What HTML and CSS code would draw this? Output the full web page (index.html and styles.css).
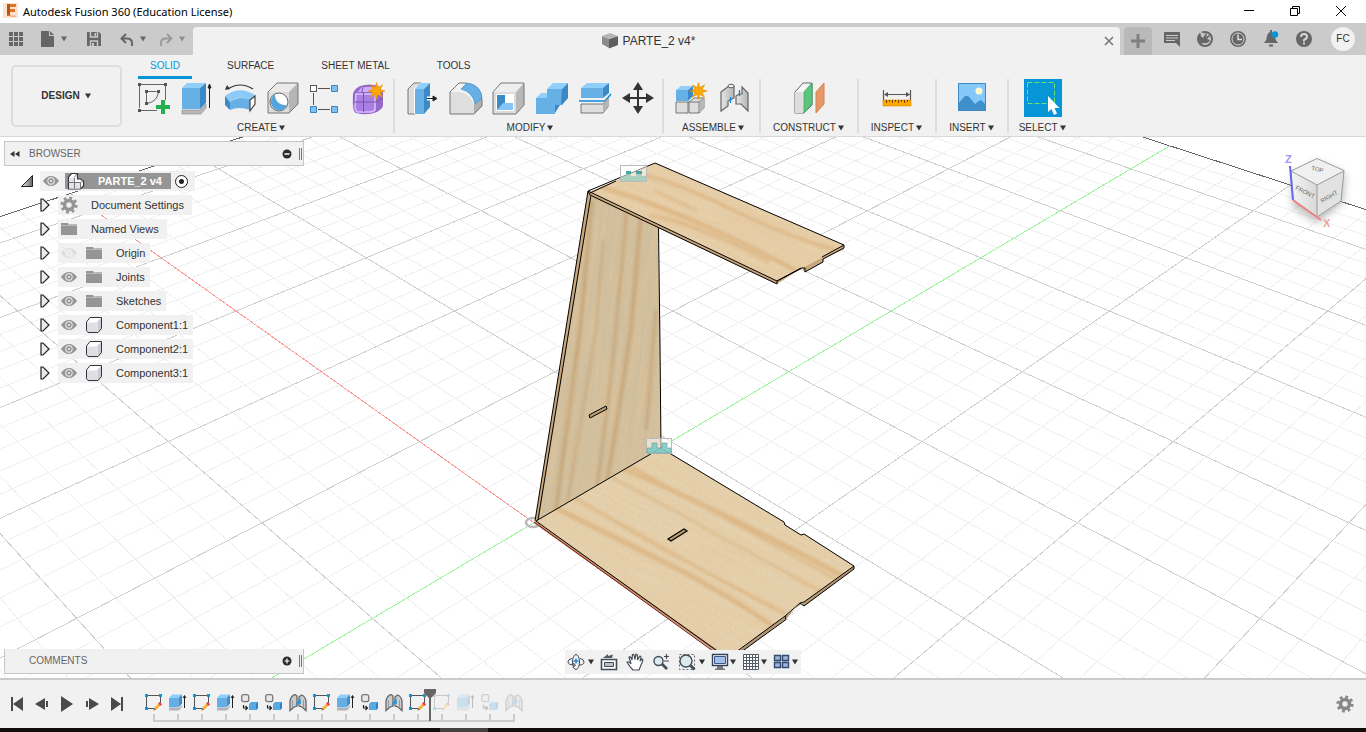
FILE: index.html
```html
<!DOCTYPE html>
<html lang="en">
<head>
<meta charset="utf-8">
<title>Autodesk Fusion 360 (Education License)</title>
<link rel="stylesheet" href="styles.css">
</head>
<body>
<svg class="sprite" aria-hidden="true">
  <defs>
    <linearGradient id="steel" x1="0" x2="1"><stop offset="0" stop-color="#e6e6e6"/><stop offset="1" stop-color="#b5b5b5"/></linearGradient>
    <linearGradient id="tri" x1="0" x2="1"><stop offset="0" stop-color="#eee"/><stop offset="1" stop-color="#666"/></linearGradient>
    <symbol id="caret" viewBox="0 0 8 6"><path d="M1 0.5h6L4 5.5z" fill="currentColor"/></symbol>
    <symbol id="arrow" viewBox="0 0 10 14"><path d="M1 1h2l6 6-6 6H1z" fill="#ececec" stroke="#222" stroke-width="1.200"/></symbol>
    <symbol id="eye" viewBox="0 0 16 12"><path d="M0 6Q3.500 1 8 1T16 6Q12.500 11 8 11T0 6z" fill="#959595"/><circle cx="8" cy="6" r="3.700" fill="#f1f1f1"/><circle cx="8" cy="6" r="2.700" fill="#959595"/><circle cx="8" cy="6" r="1.100" fill="#f1f1f1"/></symbol>
    <symbol id="eye-off" viewBox="0 0 16 12"><path d="M0 6Q3.500 1 8 1T16 6Q12.500 11 8 11T0 6z" fill="#dcdcdc"/><circle cx="8" cy="6" r="3.700" fill="#f1f1f1"/><circle cx="8" cy="6" r="2.300" fill="#dcdcdc"/><path d="M1 0l14 12" stroke="#f1f1f1" stroke-width="3"/><path d="M2 0l13 12" stroke="#dcdcdc"/></symbol>
    <symbol id="folder" viewBox="0 0 16 14"><path d="M0 3.500V1h7l1.500 2.500z" fill="#959595"/><path d="M0 4h16v9H0z" fill="#959595"/><path d="M0 3h8l1-1h7v2H0z" fill="#b8b8b8"/></symbol>
    <symbol id="gear" viewBox="0 0 18 18"><circle cx="9" cy="9" r="4.500" fill="none" stroke="currentColor" stroke-width="3.600"/><circle cx="9" cy="9" r="7.200" fill="none" stroke="currentColor" stroke-width="2.800" stroke-dasharray="2.830 2.830"/></symbol>
    <symbol id="body" viewBox="0 0 18 18"><path d="M1.500 6L5 1.500h11.500v11L13 16.500H3l-1.500-2z" fill="#fff"/><path d="M2 6.500h10v9.500H3l-1-1.500z" fill="#dcdfe4"/><path d="M12.500 5.500l4-4v11l-4 4z" fill="#c9ccd4"/><path d="M1.500 6L5 1.500h11.500v11L13 16.500H3l-1.500-2z" fill="none" stroke="#33343c"/></symbol>
    <symbol id="sketch" viewBox="0 0 18 18"><path d="M3 1.500h12M1.500 3v10M15.500 3v6M3 14.500h6" stroke="#555" fill="none"/><path d="M0 0h3v3H0zM14 0h3v3h-3zM0 13h3v3H0z" fill="#0a96e6"/><path d="M8.500 16.500l1-3 4-4 2 2-4 4z" fill="#f9b233"/><path d="M13 9.500l1.500-1.500 2.500 2.200-1.500 1.700z" fill="#ee4050"/><path d="M8.500 16.500l.8-2.500 1.800 1.700z" fill="#777"/></symbol>
    <symbol id="extrude" viewBox="0 0 18 18"><path d="M0 14h10l3-3v2l-3 3.500H0z" fill="#b4b4b4"/><path d="M0 4h9.500v9.500H0z" fill="#62aee5"/><path d="M0 4l3-3.500h10L9.500 4z" fill="#8fcdf9"/><path d="M9.500 4L13 .5v9l-3.500 4z" fill="#3d8ecb"/><path d="M15.500 14V2M14 4l1.500-2.500L17 4" stroke="#222" fill="none"/></symbol>
    <symbol id="insertc" viewBox="0 0 18 18"><rect x=".7" y=".7" width="7" height="7" rx="2" fill="#e8e8e8" stroke="#777" stroke-width="1.300"/><path d="M8 10l2-2h7v6l-2 2H8z" fill="#58a8e2"/><path d="M15 10l2-2v6l-2 2z" fill="#2f80c0"/><path d="M2.500 11v3H6M4.500 12L6.500 14l-2 2" stroke="#222" stroke-width="1.200" fill="none"/></symbol>
    <symbol id="joint-s" viewBox="0 0 18 18"><path d="M1 7q1-5 5-6.500l2 1.500v10l-3 1-4 3.500zM17 7q-1-5-4.500-6L10 3v9l3 1 4 3.500z" fill="#cdcdcd" stroke="#666" stroke-width="1.300"/><path d="M3.500 6v7M14.500 6v7" stroke="#999"/><path d="M7 11l4-5v4" stroke="#0a96e6" stroke-width="1.300" fill="none"/></symbol>
    <symbol id="spark" viewBox="0 0 18 18"><path d="M9 0l1.500 5.200L15.400 2.600 12.800 7.500 18 9l-5.200 1.500 2.600 4.900-4.900-2.600L9 18l-1.500-5.200-4.900 2.600 2.600-4.900L0 9l5.200-1.500-2.600-4.900 4.900 2.600z" fill="#ffa800" stroke="#e08a00" stroke-width=".6"/></symbol>
    <symbol id="assy" viewBox="0 0 18 18"><path d="M1.500 5l3-3.500h6V7h3l3 2v5l-3 3h-12z" fill="#fff" stroke="#33343c" stroke-width="1.200"/><path d="M2 5.500h5v5H2zM2 11h5v5.500H2zM8 11h5v5.500H8z" fill="#e2e4e8"/><path d="M7.500 5.500V16M1.500 10.500h12M7.500 5L10 2M13.500 10.500l2.500-2M13.500 10.500V17" stroke="#777" fill="none"/></symbol>
  </defs>
</svg>

<div class="app">
  <header class="titlebar">
    <svg class="logo" width="15" height="15" viewBox="0 0 15 15"><rect width="15" height="15" fill="#fbe3cf"/><path d="M4 1h9v3H7v2h5v3H7v4H4z" fill="#d9762b"/><path d="M4 1h3v10l-3 1z" fill="#b7541b"/><path d="M7 11h6v3H7z" fill="#f3b588"/><path d="M8 9.500h5v3H8z" fill="#fbe3cf"/></svg>
    <span class="app-name">Autodesk Fusion 360 (Education License)</span>
    <div class="win-buttons">
      <button aria-label="Minimize"><svg width="12" height="12"><path d="M1 4.500h10" stroke="#000"/></svg></button>
      <button aria-label="Restore"><svg width="12" height="12"><path d="M1.500 2.500h7v7h-7zM3.500 2V.500h7v7H9" fill="none" stroke="#000"/></svg></button>
      <button aria-label="Close"><svg width="12" height="12"><path d="M1 0l10 10M11 0L1 10" stroke="#000"/></svg></button>
    </div>
  </header>

  <div class="appbar">
    <div class="quick">
      <button aria-label="Data panel"><svg width="14" height="14" fill="#666"><path d="M0 0h4v4H0zM5 0h4v4H5zM10 0h4v4h-4zM0 5h4v4H0zM5 5h4v4H5zM10 5h4v4h-4zM0 10h4v4H0zM5 10h4v4H5zM10 10h4v4h-4z"/></svg></button>
      <button class="file" aria-label="File"><svg width="14" height="16"><path d="M0 0h8v5h5v11H0z" fill="#666"/><path d="M9 0l4 4H9z" fill="#666"/></svg><svg class="car" width="8" height="6"><use href="#caret"/></svg></button>
      <button class="save" aria-label="Save"><svg width="14" height="14"><path d="M0 0h12l2 2v12H0z" fill="#666"/><path d="M3.500 0v5h7V0M3.500 14V9h7v5" fill="none" stroke="#cbcbcb" stroke-width="1.400"/><path d="M5 11h2v3H5zM7.500 1h1.500v3H7.500z" fill="#cbcbcb"/></svg></button>
      <button class="undo" aria-label="Undo"><svg width="14" height="13"><path d="M12 13V10q0-4.500-5-4.500H2M6 1L1.500 5.500 6 10" fill="none" stroke="#666" stroke-width="2"/></svg><svg class="car" width="8" height="6"><use href="#caret"/></svg></button>
      <button class="redo" aria-label="Redo"><svg width="14" height="13"><path d="M2 13V10q0-4.500 5-4.500h5M8 1l4.500 4.500L8 10" fill="none" stroke="#999" stroke-width="1.800"/></svg><svg class="car" width="8" height="6"><use href="#caret"/></svg></button>
    </div>
    <div class="doc-tab">
      <span class="doc-title"><svg width="16" height="16" viewBox="0 0 16 16"><path d="M0 3l7 3v9l-7-4z" fill="#8a8a8a"/><path d="M7 6l9-3v9l-9 3.500z" fill="#5f5f5f"/><path d="M0 3l8-3 8 3-9 3z" fill="#b5b5b5"/></svg>PARTE_2 v4*</span>
      <button class="tab-close" aria-label="Close tab"><svg width="10" height="10"><path d="M1 1l8 8M9 1L1 9" stroke="#777" stroke-width="1.600"/></svg></button>
    </div>
    <button class="new-tab" aria-label="New tab"><svg width="14" height="14"><path d="M7 0v14M0 7h14" stroke="#808080" stroke-width="3"/></svg></button>
    <div class="status">
      <button aria-label="Comments"><svg width="18" height="18"><path d="M1 2h16v15l-4-4H1z" fill="#666"/><path d="M3 5.500h12M3 8h12M3 10.500h9" stroke="#cbcbcb"/></svg></button>
      <button aria-label="Extensions"><svg width="18" height="18"><circle cx="9" cy="9" r="7" fill="none" stroke="#666" stroke-width="2"/><path d="M3 4l4 4 1-2 2-3 1 1-1 3 3-2 1 1-3 3 3 1q-2 4-6 3l-4 1-1-4z" fill="#666"/><path d="M4 2.500l4 2" stroke="#cbcbcb" stroke-width="1.500"/></svg></button>
      <button aria-label="Job status"><svg width="18" height="18"><circle cx="9" cy="9" r="8" fill="#666"/><circle cx="9" cy="9" r="6" fill="none" stroke="#d6d6d6"/><path d="M9 4.500V9.500h4" fill="none" stroke="#e0e0e0" stroke-width="1.500"/></svg></button>
      <button aria-label="Notifications"><svg width="18" height="18"><path d="M2 13q3-3 3-7 1-4 4-4t4 4q0 4 3 7zM7 14.500h4v2H7zM8 0h2v3H8z" fill="#666"/><circle cx="13" cy="4.500" r="3.200" fill="#0696d7"/></svg></button>
      <button aria-label="Help"><svg width="18" height="18"><circle cx="9" cy="9" r="8" fill="#666"/><path d="M6 7q0-3 3-3t3 2.800Q12 8.500 9 10v1.500" fill="none" stroke="#d6d6d6" stroke-width="2"/><path d="M8 12.500h2v2H8z" fill="#d6d6d6"/></svg></button>
      <button class="avatar">FC</button>
    </div>
  </div>

  <section class="ribbon">
    <button class="workspace">DESIGN<svg width="8" height="6"><use href="#caret"/></svg></button>
    <div class="ribbon-main">
      <nav class="tabs">
        <button class="on">SOLID</button><button>SURFACE</button><button>SHEET METAL</button><button>TOOLS</button>
      </nav>
      <div class="groups">
        <div class="group">
          <div class="tools">
            <button aria-label="Create Sketch"><svg width="34" height="36" viewBox="0 0 34 36"><path d="M4 4.500h24M2.500 6v22M28.500 6v14M4 30.500h16" stroke="#666" fill="none"/><path d="M9.500 10v14M9.500 11.500h10M21.500 12q-1 9-11 11.500" stroke="#666" fill="none"/><path d="M1 3h3v3H1zM27 3h3v3h-3zM1 29h3v3H1zM8 10h3v3H8zM20 10h3v3h-3zM8 22h3v3H8z" fill="#555"/><path d="M24 20h4v5h5v4h-5v5h-4v-5h-5v-4h5z" fill="#22b14c"/></svg></button>
            <button aria-label="Extrude"><svg width="34" height="36" viewBox="0 0 34 36"><path d="M2 30h18l6-6v4l-5 6H2z" fill="#b8b8b8" stroke="#888" stroke-width=".6"/><path d="M2 8h18v21H2z" fill="#66b0e6"/><path d="M2 8l5-5h19l-6 5z" fill="#91cffb"/><path d="M20 8l6-5v20l-6 6z" fill="#3b8ac6"/><path d="M29.500 28V5M28 8l1.500-4L31 8z" stroke="#222" fill="#222"/></svg></button>
            <button aria-label="Revolve"><svg width="34" height="36" viewBox="0 0 34 36"><path d="M2 16Q16 5 32 15l-4 6Q16 14 7 22z" fill="#8ccbf8"/><path d="M2 16l5 6v8l-5-5z" fill="#3b8ac6"/><path d="M7 22q9-7 21-2l-1 10q-11-4-20 0z" fill="#66b0e6"/><path d="M27 20l5-4v8l-5 7z" fill="#fff" stroke="#444" stroke-width="1.200"/><path d="M5 9Q17 1 30 9" stroke="#333" stroke-width="1.200" fill="none"/><path d="M2 10l2-5 3 4z" fill="#333"/></svg></button>
            <button aria-label="Hole"><svg width="34" height="36" viewBox="0 0 34 36"><path d="M2 12l9-9h21v21l-9 9H2z" fill="#eaeaea"/><path d="M2 12h21v21H2z" fill="#dcdcdc"/><path d="M23 12l9-9v21l-9 9z" fill="#b5b5b5"/><path d="M2 12l9-9h21v21l-9 9H2z" fill="none" stroke="#777"/><circle cx="13" cy="22" r="9" fill="#fff" stroke="#666"/><path d="M9 14.500q0 10 12 11A8.500 8.500 0 1 1 9 14.500z" fill="#55a4de"/></svg></button>
            <button aria-label="Pattern"><svg width="34" height="36" viewBox="0 0 34 36"><path d="M9 8.500h12M9 29.500h12M4.500 13v12" stroke="#555" fill="none"/><rect x="1.500" y="5.500" width="6" height="6" fill="#fff" stroke="#555"/><path d="M22.500 5.500h6v6h-6zM1.500 26.500h6v6h-6zM22.500 26.500h6v6h-6z" fill="#7ec0f2" stroke="#3a87c2"/></svg></button>
            <button aria-label="Create Form"><svg width="34" height="36" viewBox="0 0 34 36"><path d="M1 14q1-5 7-8 10-3 18 0l5 6v14q-1 3-6 6-10 4-21 1-4-1-3-19z" fill="#9568cc"/><path d="M3 16q0-3 3-3h16q3 0 2 4v11q0 4-3 4H6q-3-1-3-3z" fill="#a97fe3"/><path d="M3 15l7-8h14l-3 5H6z" fill="#cfaef8"/><path d="M4 14h19v16q-2 2-5 2H6q-3-1-3-5z" fill="none" stroke="#d9bfff" stroke-width="1.500"/><path d="M2 22h22l7-4M11.500 7q-3 5 0 6v19" stroke="#7a52ac" fill="none"/><svg x="16" y="2" width="17" height="18"><use href="#spark"/></svg></svg></button>
          </div>
          <button class="label">CREATE<svg width="8" height="6"><use href="#caret"/></svg></button>
        </div>
        <div class="group">
          <div class="tools">
            <button aria-label="Press Pull"><svg width="34" height="36" viewBox="0 0 34 36"><path d="M2 9l6-6h7v24l-6 7H2z" fill="#ddd" stroke="#777"/><path d="M8 9l6-6h9v24l-6 7H8z" fill="#fff"/><path d="M9 9h9v25H9z" fill="#66b0e6"/><path d="M9 9l5-6h10l-6 6z" fill="#91cffb"/><path d="M18 9l6-6v24l-6 7z" fill="#3b8ac6"/><path d="M21 18.500h6" stroke="#fff" stroke-width="4"/><path d="M21 18.500h6M27 16l4 2.500-4 2.500z" stroke="#222" fill="#222"/></svg></button>
            <button aria-label="Fillet"><svg width="34" height="36" viewBox="0 0 34 36"><path d="M1 12l9-9h6q16 2 17 17v6l-8 8H1z" fill="#f2f2f2"/><path d="M1 12h7q15 1 17 15v7H1z" fill="#dedede"/><path d="M25 24l8-7v9l-8 8z" fill="#b0b0b0"/><path d="M1 12l9-9h6q16 2 17 17v6l-8 8H1z" fill="none" stroke="#777"/><path d="M12 9l6-6q14 2 15 15l-7 6q-2-12-14-15z" fill="#66b0e6" stroke="#3b8ac6" stroke-width=".7"/></svg></button>
            <button aria-label="Shell"><svg width="34" height="36" viewBox="0 0 34 36"><path d="M1 12l8-9h23v22l-8 9H1z" fill="#eee"/><path d="M24 12l8-9v22l-8 9z" fill="#b8b8b8"/><path d="M1 12h23v22H1z" fill="#dcdcdc"/><path d="M1 12l8-9h23v22l-8 9H1z" fill="none" stroke="#777"/><path d="M4 14h18v17H4z" fill="#fff"/><path d="M5 15h8v8l-8 7z" fill="#3b8ac6"/><path d="M5 30l6-7h10v7z" fill="#83c5f5"/></svg></button>
            <button aria-label="Combine"><svg width="34" height="36" viewBox="0 0 34 36"><path d="M1 18h11V9h15v16h-7v9H1z" fill="#66b0e6"/><path d="M1 18l5-5h6v5zM12 9l6-6h15l-6 6z" fill="#91cffb"/><path d="M27 9l6-6v15l-6 7h-1v-3zM20 25h5l-5 8z" fill="#3b8ac6"/></svg></button>
            <button aria-label="Split Body"><svg width="34" height="36" viewBox="0 0 34 36"><path d="M3 8l6-5h22l-4 5z" fill="#91cffb"/><path d="M3 8h22v10H3z" fill="#66b0e6"/><path d="M25 8l6-5v10l-6 5z" fill="#3b8ac6"/><path d="M1 21h26l6-7" fill="none" stroke="#0a8adc" stroke-width="1.500"/><path d="M3 24h22l5-6v9l-5 6H3z" fill="#ddd" stroke="#777"/><path d="M25 24l5-5v8l-5 5z" fill="#b4b4b4"/></svg></button>
            <button aria-label="Move"><svg width="34" height="36" viewBox="0 0 34 36"><path d="M17 7v22M5 18h24" stroke="#333" stroke-width="2"/><path d="M17 2l5 8H12zM17 34l5-8H12zM1 18l8-5v10zM33 18l-8-5v10z" fill="#333"/></svg></button>
          </div>
          <button class="label">MODIFY<svg width="8" height="6"><use href="#caret"/></svg></button>
        </div>
        <div class="group">
          <div class="tools">
            <button aria-label="New Component"><svg width="34" height="36" viewBox="0 0 34 36"><path d="M1 22h12v11H1zM14 22l5-4h10v10l-5 5H14z" fill="#dedede" stroke="#777"/><path d="M13 22h11v11M24 22l5-4" fill="none" stroke="#777"/><path d="M25 22l4-4v10l-4 5z" fill="#b8b8b8"/><path d="M1 10h12v11H1z" fill="#66b0e6"/><path d="M1 10l5-4h12l-5 4z" fill="#91cffb"/><path d="M13 10l5-4v10l-5 5z" fill="#3b8ac6"/><svg x="15" y="2" width="17" height="18"><use href="#spark"/></svg></svg></button>
            <button aria-label="Joint"><svg width="34" height="36" viewBox="0 0 34 36"><path d="M3 12l8-6q3-3 5 0v12l-6 3v5l-7 5z" fill="url(#steel)" stroke="#666" stroke-width="1.200"/><ellipse cx="13" cy="6" rx="3" ry="1.800" fill="#eee" stroke="#666"/><path d="M24 7l6 6v18l-7-7h-5v-8l3-2h3z" fill="url(#steel)" stroke="#666" stroke-width="1.200"/><path d="M12.500 17v6M21.500 10v6" stroke="#0a8adc" stroke-width="1.300"/></svg></button>
          </div>
          <button class="label">ASSEMBLE<svg width="8" height="6"><use href="#caret"/></svg></button>
        </div>
        <div class="group narrow">
          <div class="tools">
            <button aria-label="Offset Plane"><svg width="34" height="36" viewBox="0 0 34 36"><path d="M3 12l8-9h9v22l-8 8H3z" fill="#f5f5f5" stroke="#666"/><path d="M3 12h8v21H3z" fill="#ddd"/><path d="M12 12l8-9v21l-8 9z" fill="#5cc47c" stroke="#3fae62"/><path d="M24 12l8-9v21l-8 9z" fill="#e5986a" stroke="#dc8048"/></svg></button>
          </div>
          <button class="label">CONSTRUCT<svg width="8" height="6"><use href="#caret"/></svg></button>
        </div>
        <div class="group narrow">
          <div class="tools">
            <button aria-label="Measure"><svg width="34" height="36" viewBox="0 0 34 36"><path d="M3.500 10v10M30.500 10v10M5 14.500h24" stroke="#555" stroke-width="1.200"/><path d="M4 14.500l4-2.500v5zM30 14.500l-4-2.500v5z" fill="#555"/><path d="M3 20h28v6H3z" fill="#ffa800" stroke="#d98b00" stroke-width=".6"/><path d="M6.500 20v3M9.500 20v2M12.500 20v3M15.500 20v2M18.500 20v3M21.500 20v2M24.500 20v3M27.500 20v2" stroke="#664400"/></svg></button>
          </div>
          <button class="label">INSPECT<svg width="8" height="6"><use href="#caret"/></svg></button>
        </div>
        <div class="group narrow">
          <div class="tools">
            <button aria-label="Insert Image"><svg width="34" height="36" viewBox="0 0 34 36"><path d="M3 3h28v28H3z" fill="#85c8fa"/><path d="M3 24l6-7q3-3 6 1l5 6 4-3q2-2 4 1l3 3v6H3z" fill="#3f90ca"/><circle cx="24" cy="11" r="3.500" fill="#fff9cc"/><path d="M3.500 3.500h27v27h-27z" fill="none" stroke="#3b8ac6"/></svg></button>
          </div>
          <button class="label">INSERT<svg width="8" height="6"><use href="#caret"/></svg></button>
        </div>
        <div class="group narrow last">
          <div class="tools">
            <button class="active" aria-label="Select"><svg width="38" height="38" viewBox="0 0 38 38"><path d="M3.500 3.500h27v21h-27z" fill="none" stroke="#6be073" stroke-dasharray="5 2"/><path d="M24 17v16l3.500-3 2.500 6 3-1.500-2.500-5.500h5z" fill="#fff"/></svg></button>
          </div>
          <button class="label">SELECT<svg width="8" height="6"><use href="#caret"/></svg></button>
        </div>
      </div>
    </div>
  </section>

  <main class="viewport">
    <svg class="scene" viewBox="0 137 1366 541" preserveAspectRatio="xMidYMid slice">
      <defs>
        <filter id="grain" x="0" y="0" width="100%" height="100%"><feTurbulence type="fractalNoise" baseFrequency=".014 .3" numOctaves="4" seed="4"/><feColorMatrix values="0 0 0 0 .80  0 0 0 0 .58  0 0 0 0 .34  1.800 0 0 0 -.62"/></filter>
        <filter id="speck" x="0" y="0" width="100%" height="100%"><feTurbulence type="fractalNoise" baseFrequency=".35 .8" numOctaves="2" seed="9"/><feColorMatrix values="0 0 0 0 .62  0 0 0 0 .45  0 0 0 0 .25  1.600 0 0 0 -.6"/></filter>
        <filter id="soft"><feGaussianBlur stdDeviation="1.500"/></filter>
        <filter id="shadow" x="-40%" y="-40%" width="180%" height="180%"><feGaussianBlur stdDeviation="4"/></filter>
        <clipPath id="c-top"><path d="M589 192L655 163 844 245 823 257 803 268 777 281z"/></clipPath>
        <clipPath id="c-side"><path d="M590 195L658 227 660 345 661 448 537 521z"/></clipPath>
        <clipPath id="c-base"><path d="M536 521L661 448 784 522 785 525 801 535 804 534 854 566 804 602 801 602 785 615 729 658z"/></clipPath>
        <linearGradient id="face" x1="0" x2="1"><stop offset="0" stop-color="#f4f4f4"/><stop offset="1" stop-color="#d8d8d8"/></linearGradient>
      </defs>
      <g id="grid" shape-rendering="crispEdges" fill="none"></g>

      <ellipse cx="533" cy="522.500" rx="7" ry="4.500" fill="none" stroke="#b9b9b9" stroke-width="2.500"/>

      <g clip-path="url(#c-side)">
        <path d="M530 190h140v340H530z" fill="#d0c0a0"/>
        <rect x="-200" y="-90" width="400" height="180" transform="translate(600 360) rotate(98)" filter="url(#grain)" opacity=".6"/>
        <rect x="-200" y="-90" width="400" height="180" transform="translate(600 360) rotate(98)" filter="url(#speck)" opacity=".4"/>
        <g fill="none" stroke="#b98850" opacity=".4" filter="url(#soft)">
          <path d="M627 205L616 330 597 490" stroke-width="3"/><path d="M641 215L631 330 606 490" stroke-width="4"/><path d="M592 200L580 330 555 515" stroke-width="4"/><path d="M603 240L596 330 566 510" stroke-width="2"/><path d="M656 310L646 430" stroke-width="3"/>
        </g>
      </g>
      <path d="M588 191L591 195 539 519 535 521z" fill="#c9a77c"/>
      <path d="M588 191L535 521M591 195L538 520M658.500 228L660 345 661 448" fill="none" stroke="#000"/>
      <path d="M589 415L606 406 607 409 590 418z" fill="#b79d70" stroke="#000"/>

      <path d="M535 521L729 655 730 662 534 523z" fill="#c6966a"/>
      <path d="M854 566v3L804 606 800 603 786 619 729 661V656L785 616z" fill="#b59772"/>
      <g clip-path="url(#c-base)">
        <path d="M530 440h330v220H530z" fill="#e6d3b0"/>
        <rect x="-220" y="-140" width="440" height="280" transform="translate(690 550) rotate(29)" filter="url(#grain)" opacity=".6"/>
        <rect x="-220" y="-140" width="440" height="280" transform="translate(690 550) rotate(29)" filter="url(#speck)" opacity=".3"/>
        <g fill="none" stroke="#d39a58" opacity=".42" filter="url(#soft)">
          <path d="M622 468Q720 510 850 580" stroke-width="5"/><path d="M612 477L822 592" stroke-width="2"/><path d="M575 498Q680 560 790 616" stroke-width="3"/><path d="M556 508Q610 535 672 566T785 635" stroke-width="5"/><path d="M620 460L855 590" stroke-width="2"/>
        </g>
      </g>
      <path d="M536 521L661 448 784 522 785 525 801 535 804 534 854 566 804 602 800 603 785 616 732 655M854 566v3L804 606 800 603M785 616l1 3.500L737 655M536 521L727 658" fill="none" stroke="#000"/>
      <path d="M534 522L724 659" stroke="#7e1712"/>
      <path d="M668 539L684 529 687 531 671 541z" fill="#b79d70" stroke="#000" stroke-width="1.200"/>

      <path d="M588 191L777 281 844 245v4L823 259v3L805 272 802 268 777 284 590 196z" fill="#c9a57b"/>
      <g clip-path="url(#c-top)">
        <path d="M580 160h270v130H580z" fill="#e8d1ac"/>
        <rect x="-180" y="-90" width="360" height="180" transform="translate(715 222) rotate(24)" filter="url(#grain)" opacity=".6"/>
        <rect x="-180" y="-90" width="360" height="180" transform="translate(715 222) rotate(24)" filter="url(#speck)" opacity=".3"/>
        <g fill="none" stroke="#d39a58" opacity=".42" filter="url(#soft)">
          <path d="M645 175Q690 188 735 211T835 250" stroke-width="3"/><path d="M602 187Q700 218 795 270" stroke-width="4"/><path d="M655 191L697 211" stroke-width="2"/><path d="M650 215Q700 225 770 262" stroke-width="3"/>
        </g>
      </g>
      <path d="M588 191L655 163 844 245v3L823 259v3L805 272v-4L802 268 777 281v3L590 195zM588 191L777 281 801 268M844 245L822 257M590 193L616 181" fill="none" stroke="#000"/>

      <g stroke="#bbb" fill="#fff" fill-opacity=".5"><rect x="620.500" y="165.500" width="26" height="16"/><rect x="646.500" y="438.500" width="25" height="15"/></g>
      <path d="M621 176h5v-5h5v5h5v-5h6v5h4v5h-25z" fill="#8fc5b4" fill-opacity=".7"/><path d="M626 171h5v3h-5zM636 171h6v3h-6z" fill="#49a5a2"/>
      <path d="M647 448h5v-5h5v5h5v-5h5v5h4v5h-24z" fill="#6fc6bf" fill-opacity=".8" stroke="#639b95" stroke-width=".6"/>

      <g>
        <path d="M1292 173L1317 158 1345 170 1343 198 1317 219 1293 203z" fill="#888" opacity=".55" transform="translate(0 4)" filter="url(#shadow)"/>
        <path d="M1291 171L1317 158.500 1344 170.500 1317 185z" fill="#f0f0f0"/>
        <path d="M1291 171L1317 185V217L1293 200z" fill="url(#face)"/>
        <path d="M1317 185L1344 171 1341 201 1317 217z" fill="#e2e2e2"/>
        <path d="M1291 171L1317 158.500 1344 170.500 1341 201 1317 217 1293 200zL1317 185 1344 171M1317 185V217" fill="none" stroke="#9b9b9b"/>
        <path d="M1290 166L1293 200" stroke="#6a65f0" stroke-width="2"/><path d="M1293 200L1321 220" stroke="#ef8080" stroke-width="2"/>
        <text class="axis z" x="1285" y="163">Z</text><text class="axis x" x="1323" y="227">X</text>
        <text class="cube" transform="translate(1295 189) rotate(27)">FRONT</text>
        <text class="cube" transform="translate(1322 203) rotate(-30)">RIGHT</text>
        <text class="cube" transform="translate(1311 170) rotate(12)">TOP</text>
      </g>
    </svg>

    <section class="browser">
      <div class="panel-head"><svg width="12" height="8"><path d="M5.500 1v6L1 4zM10.500 1v6L6 4z" fill="#333"/></svg><h2>BROWSER</h2><button aria-label="Collapse browser"><svg width="10" height="10"><circle cx="5" cy="5" r="4.500" fill="#2d2d2d"/><path d="M2.500 5h5" stroke="#fff" stroke-width="1.500"/></svg></button><i class="grip"></i></div>
      <ul class="tree">
        <li class="root"><svg width="12" height="12"><path d="M.5 11.500L11.500.5v11z" fill="url(#tri)" stroke="#222"/></svg><span class="cell"><svg width="16" height="12"><use href="#eye"/></svg><span class="picked"><svg width="18" height="18"><use href="#assy"/></svg>PARTE_2 v4</span><input type="radio" checked aria-label="Activate PARTE_2 v4"></span></li>
        <li><svg width="10" height="14"><use href="#arrow"/></svg><span class="cell"><svg class="gear" width="18" height="18"><use href="#gear"/></svg><b>Document Settings</b></span></li>
        <li><svg width="10" height="14"><use href="#arrow"/></svg><span class="cell"><svg width="18" height="14"><use href="#folder"/></svg><b>Named Views</b></span></li>
        <li class="deep"><svg width="10" height="14"><use href="#arrow"/></svg><span class="cell"><svg width="16" height="12"><use href="#eye-off"/></svg><svg width="18" height="14"><use href="#folder"/></svg><b>Origin</b></span></li>
        <li class="deep"><svg width="10" height="14"><use href="#arrow"/></svg><span class="cell"><svg width="16" height="12"><use href="#eye"/></svg><svg width="18" height="14"><use href="#folder"/></svg><b>Joints</b></span></li>
        <li class="deep"><svg width="10" height="14"><use href="#arrow"/></svg><span class="cell"><svg width="16" height="12"><use href="#eye"/></svg><svg width="18" height="14"><use href="#folder"/></svg><b>Sketches</b></span></li>
        <li class="deep"><svg width="10" height="14"><use href="#arrow"/></svg><span class="cell"><svg width="16" height="12"><use href="#eye"/></svg><svg width="18" height="18"><use href="#body"/></svg><b>Component1:1</b></span></li>
        <li class="deep"><svg width="10" height="14"><use href="#arrow"/></svg><span class="cell"><svg width="16" height="12"><use href="#eye"/></svg><svg width="18" height="18"><use href="#body"/></svg><b>Component2:1</b></span></li>
        <li class="deep"><svg width="10" height="14"><use href="#arrow"/></svg><span class="cell"><svg width="16" height="12"><use href="#eye"/></svg><svg width="18" height="18"><use href="#body"/></svg><b>Component3:1</b></span></li>
      </ul>
    </section>

    <section class="comments panel-head"><h2>COMMENTS</h2><button aria-label="Expand comments"><svg width="10" height="10"><circle cx="5" cy="5" r="4.500" fill="#2d2d2d"/><path d="M2.500 5h5M5 2.500v5" stroke="#fff" stroke-width="1.200"/></svg></button><i class="grip"></i></section>

    <div class="navbar">
      <button aria-label="Orbit"><svg width="18" height="18"><ellipse cx="9" cy="9" rx="3.500" ry="7.500" fill="none" stroke="#444c58"/><path d="M5 5.500Q1 6 1 9t7 3M13 5.500q4 .5 4 3.500t-5 3M6 10l2.500 2L6 14.500" fill="none" stroke="#444c58"/><path d="M9 5.500v5M6.500 8h5" stroke="#1b87e0" stroke-width="1.400"/></svg></button>
      <svg class="spaced" width="8" height="6"><use href="#caret"/></svg>
      <button aria-label="Look at"><svg width="18" height="18"><path d="M1.500 6.500h15v10h-15z" fill="#fff" stroke="#444c58" stroke-width="1.600"/><path d="M4.500 9.500h9v4h-9z" fill="#b9bec8" stroke="#444c58"/><path d="M3 5l5-4v2l5-1.500L12 5z" fill="#555c68"/></svg></button>
      <button aria-label="Pan"><svg width="18" height="18"><path d="M7 17Q3 13 1 9q2-1 4 2L3 4q2-1 3 3L6.500 1.500q2-1 2.300 5L10 1q2 0 1.500 6L14 3q2 0 0 5l2-2q2 0-1 6l-2 5z" fill="#fff" stroke="#444c58" stroke-width="1.200"/></svg></button>
      <button aria-label="Zoom"><svg width="18" height="18"><circle cx="6.500" cy="8" r="4.500" fill="#dcebed" stroke="#444c58" stroke-width="1.400"/><path d="M10 11l5 5" stroke="#444c58" stroke-width="2.600"/><path d="M14.500 1v5M12 3.500h5M12 8h5" stroke="#444c58" stroke-width="1.200"/></svg></button>
      <button aria-label="Fit"><svg width="18" height="18"><path d="M1.500 1.500h15v15h-15z" fill="none" stroke="#666" stroke-dasharray="2 2"/><circle cx="8" cy="8" r="6" fill="#dcebed" stroke="#444c58" stroke-width="1.400"/><path d="M12.500 12.500l4 4" stroke="#444c58" stroke-width="3"/></svg></button>
      <svg class="spaced" width="8" height="6"><use href="#caret"/></svg>
      <button aria-label="Display settings"><svg width="18" height="18"><path d="M1.500 1.500h15v11h-15z" fill="#fff" stroke="#33415e" stroke-width="1.400"/><path d="M3.500 3.500h11v7h-11z" fill="#a5c0e8" stroke="#3d5788"/><path d="M6 13h6v3H6zM4 15.500h10v1.500H4z" fill="#777"/></svg></button>
      <svg width="8" height="6"><use href="#caret"/></svg>
      <button aria-label="Grid settings"><svg width="18" height="18"><path d="M1.500 1.500h15v15h-15zM4.500 1v15M7.500 1v15M10.500 1v15M13.500 1v15M1 4.500h15M1 7.500h15M1 10.500h15M1 13.500h15" fill="#fff" stroke="#555c68"/></svg></button>
      <svg width="8" height="6"><use href="#caret"/></svg>
      <button aria-label="Viewports"><svg width="18" height="18"><path d="M1.500 2.500h6v5h-6zM9.500 2.500h6v5h-6zM1.500 9.500h6v5h-6zM9.500 9.500h6v5h-6z" fill="#9db7d8" stroke="#31486f" stroke-width="1.400"/></svg></button>
      <svg width="8" height="6"><use href="#caret"/></svg>
    </div>
  </main>

  <footer class="timeline">
    <div class="player">
      <button aria-label="Go to start"><svg width="14" height="14"><path d="M1 0h2v14H1zM13 0v14L3 7z" fill="#4a4a4a"/></svg></button>
      <button aria-label="Step back"><svg width="14" height="14"><path d="M10 1v12L0 7zM11 4h2v6h-2z" fill="#4a4a4a"/></svg></button>
      <button aria-label="Play"><svg width="14" height="16"><path d="M1 0v16l12-8z" fill="#4a4a4a"/></svg></button>
      <button aria-label="Step forward"><svg width="14" height="14"><path d="M4 1v12l10-6zM1 4h2v6H1z" fill="#4a4a4a"/></svg></button>
      <button aria-label="Go to end"><svg width="14" height="14"><path d="M11 0h2v14h-2zM1 0v14l10-7z" fill="#4a4a4a"/></svg></button>
    </div>
    <ol class="features">
      <li><svg><use href="#sketch"/></svg></li><li><svg><use href="#extrude"/></svg></li><li><svg><use href="#sketch"/></svg></li><li><svg><use href="#extrude"/></svg></li><li><svg><use href="#insertc"/></svg></li><li><svg><use href="#insertc"/></svg></li><li><svg><use href="#joint-s"/></svg></li><li><svg><use href="#sketch"/></svg></li><li><svg><use href="#extrude"/></svg></li><li><svg><use href="#insertc"/></svg></li><li><svg><use href="#joint-s"/></svg></li><li class="current"><svg><use href="#sketch"/></svg><svg class="marker" viewBox="0 0 12 32"><path d="M0 0h12v4L7 9v23H5V9L0 4z" fill="#666"/></svg></li><li class="off"><svg><use href="#sketch"/></svg></li><li class="off"><svg><use href="#extrude"/></svg></li><li class="off"><svg><use href="#insertc"/></svg></li><li class="off"><svg><use href="#joint-s"/></svg></li>
    </ol>
    <button class="settings" aria-label="Timeline settings"><svg width="18" height="18"><use href="#gear"/></svg></button>
  </footer>
  <div class="taskbar"><i></i></div>
</div>
<script src="grid.js"></script>
</body>
</html>
```
FILE: styles.css
```css
* { box-sizing: border-box; }
body { margin: 0; font: 11px/14px "Liberation Sans", Arial, sans-serif; color: #333; background: #fff; }
button { border: 0; padding: 0; margin: 0; background: none; font: inherit; color: inherit; display: flex; align-items: center; justify-content: center; }
svg { display: block; flex: none; }
h2 { margin: 0; font: inherit; }
ul, ol { list-style: none; margin: 0; padding: 0; }
.sprite { position: absolute; width: 0; height: 0; }
.app { height: 100vh; display: flex; flex-direction: column; overflow: hidden; }

.titlebar { height: 23px; display: flex; align-items: center; padding: 0 10px 0 3px; gap: 5px; color: #000; flex: none; }
.app-name { font: 11px/16px "Noto Sans", sans-serif; }
.titlebar .logo { margin-bottom: 2px; }
.win-buttons { margin-left: auto; display: flex; gap: 16px; }
.win-buttons button { width: 30px; height: 22px; }

.appbar { height: 32px; background: #cbcbcb; display: flex; align-items: flex-end; flex: none; }
.quick { width: 193px; height: 32px; padding-left: 9px; display: flex; align-items: center; color: #666; }
.quick .car { margin-left: 5px; }
.file { margin-left: 18px; }
.save { margin-left: 19px; }
.undo { margin-left: 19px; }
.redo { margin-left: 12px; }
.redo .car { color: #8c8c8c; }
.doc-tab { flex: 1; height: 28px; background: #f1f1f1; border-radius: 4px 4px 0 0; display: flex; align-items: center; padding: 0 6px 0 0; }
.doc-title { flex: 1; display: flex; justify-content: center; align-items: center; gap: 5px; font-size: 12px; }
.new-tab { width: 28px; height: 28px; background: #b9b9b9; border-radius: 4px 4px 0 0; margin-left: 4px; }
.status { height: 32px; display: flex; align-items: center; gap: 15px; padding: 0 11px; }
.avatar { width: 24px; height: 24px; border-radius: 50%; background: #f1f1f1; margin-left: 3px; font-size: 10px; }

.ribbon { height: 82px; flex: none; background: #f1f1f1; border-bottom: 1px solid #d8d8d8; display: flex; padding-left: 11px; font-size: 10px; }
.workspace { width: 111px; height: 62px; margin-top: 10px; border: 2px solid #ddd; border-radius: 5px; font-weight: bold; gap: 4px; flex: none; }
.ribbon-main { flex: 1; }
.tabs { display: flex; gap: 23px; padding-left: 16px; height: 24px; }
.tabs button { padding: 0 12px; height: 24px; border-bottom: 3px solid transparent; }
.tabs .on { color: #0696d7; border-color: #0696d7; }
.groups { display: flex; padding-left: 4px; }
.group { display: flex; flex-direction: column; align-items: center; border-right: 2px solid #ddd; height: 54px; padding: 0 7px 0 11px; }
.tools { display: flex; gap: 9px; height: 38px; align-items: center; flex: none; }
.narrow { padding: 0 12px; }
.last { border: 0; padding: 0 10px; }
.active { background: #0696d7; }
.label { height: 16px; margin-top: 3px; gap: 1px; white-space: nowrap; flex: none; }

.viewport { flex: 1; min-height: 0; position: relative; overflow: hidden; }
.scene { width: 100%; height: 100%; position: absolute; inset: 0; }
.axis { font: bold 11px "Liberation Sans", sans-serif; }
.axis.z { fill: #9a97f5; }
.axis.x { fill: #f3a0a0; }
.cube { font: 6px "Liberation Sans", sans-serif; fill: #666; }

.browser { position: absolute; left: 4px; top: 4px; width: 300px; }
.panel-head { height: 25px; background: #f1f1f1; border: 1px solid #c6c6c6; display: flex; align-items: center; padding: 0 1px 0 4px; color: #666; }
.panel-head h2 { margin-left: 8px; flex: 1; font-size: 10px; }
.panel-head button { margin-right: 7px; }
.grip { width: 3px; height: 12px; border: solid #777; border-width: 0 1px; }
.comments { position: absolute; left: 4px; bottom: 4px; width: 300px; border-top-width: 0; }
.comments h2 { margin-left: 20px; }
.tree { padding-top: 3px; }
.tree li { height: 24px; display: flex; align-items: center; padding-left: 36px; gap: 8px; }
.tree .root { padding-left: 17px; gap: 7px; }
.cell { height: 20px; background: #f1f1f1; display: flex; align-items: center; padding: 0 8px 0 2px; }
.cell b { font-weight: normal; margin-left: 13px; }
.cell .gear { color: #959595; }
.deep .cell { padding: 0 5px 0 3px; gap: 8px; }
.deep .cell b { margin-left: 5px; }
.root .cell { padding: 0 7px 0 3px; gap: 6px; }
.picked { background: #959595; color: #fff; font-weight: bold; height: 16px; display: flex; align-items: center; gap: 13px; padding: 0 9px 0 2px; }
.root input { appearance: none; width: 13px; height: 13px; margin: 0 0 0 -2px; border: 1px solid #222; border-radius: 50%; background: radial-gradient(#222 2px, #fff 3px); }

.navbar { position: absolute; left: 50%; bottom: 4px; transform: translateX(-50%); background: #f1f1f1; height: 24px; display: flex; align-items: center; padding: 0 2px; }
.navbar button + button { margin-left: 8px; }
.navbar svg + button { margin-left: 5px; }
.navbar .spaced { margin-left: 2px; }

.timeline { height: 50px; flex: none; background: #f1f1f1; border-top: 2px solid #cbcbcb; display: flex; padding: 0 12px 0 10px; align-items: center; }
.player { display: flex; gap: 11px; }
.features { display: flex; margin-left: 18px; padding-top: 7px; height: 48px; align-items: center; }
.features li { width: 24px; height: 28px; position: relative; display: flex; align-items: flex-start; justify-content: center; border-bottom: 2px solid #cbcbcb; background: linear-gradient(#cbcbcb, #cbcbcb) 11px 100% / 2px 6px no-repeat; }
.features li:first-child { border-image: linear-gradient(90deg, transparent 11px, #cbcbcb 11px) 2; border-width: 0 0 2px; border-style: solid; }
.features li:last-child { border-image: linear-gradient(90deg, #cbcbcb 13px, transparent 13px) 2; border-width: 0 0 2px; border-style: solid; }
.features svg { width: 18px; height: 18px; }
.features .off svg { opacity: .25; }
.features .marker { position: absolute; right: -6px; top: -5px; width: 12px; height: 32px; z-index: 1; }
.settings { margin-left: auto; color: #888; }
.taskbar { height: 4px; background: #120b0c; display: flex; justify-content: center; flex: none; }
.taskbar i { width: 48px; background: #454142; margin-right: 438px; }
```
FILE: grid.js
```js
// Ground plane: a runs along the red axis, b along the green one, in major squares.
const A_MAX = 5.4, B_MAX = 6.6, A_MIN = -9, B_MIN = -9, STEP = 0.2;

function project(a, b) {
  const w = 0.00368 + 0.0003 * (a + b);
  return [(1.9645 - 0.2945 * a + 0.7055 * b) / w, -554.7 + 3.965 / w];
}

const paths = { minor: "", major: "" };

function line(a1, b1, a2, b2) {
  const p = project(a1, b1), q = project(a2, b2);
  return `M${p[0].toFixed(1)} ${p[1].toFixed(1)}L${q[0].toFixed(1)} ${q[1].toFixed(1)}`;
}

const nearest = (v) => Math.max(v, -5.5);

for (let i = Math.round(A_MIN / STEP); i * STEP < A_MAX; i++) {
  const a = i * STEP;
  paths[i % 5 === 0 ? "major" : "minor"] += line(a, Math.max(nearest(B_MIN), -7 - a), a, B_MAX);
}
for (let i = Math.round(B_MIN / STEP); i * STEP < B_MAX; i++) {
  const b = i * STEP;
  paths[i % 5 === 0 ? "major" : "minor"] += line(Math.max(nearest(A_MIN), -7 - b), b, A_MAX, b);
}

const layers = [
  [paths.minor, "#f0f0f0"],
  [paths.major, "#d0d0d0"],
  [line(A_MAX, -5, A_MAX, B_MAX) + line(-5, B_MAX, A_MAX, B_MAX), "#666"],
  [line(0, 0, A_MAX, 0), "#ff9a9a"],
  [line(0, -4, 0, B_MAX), "#98f598"],
];
const grid = document.getElementById("grid");
for (const [d, stroke] of layers) {
  const path = document.createElementNS("http://www.w3.org/2000/svg", "path");
  path.setAttribute("d", d);
  path.setAttribute("stroke", stroke);
  grid.appendChild(path);
}
```
